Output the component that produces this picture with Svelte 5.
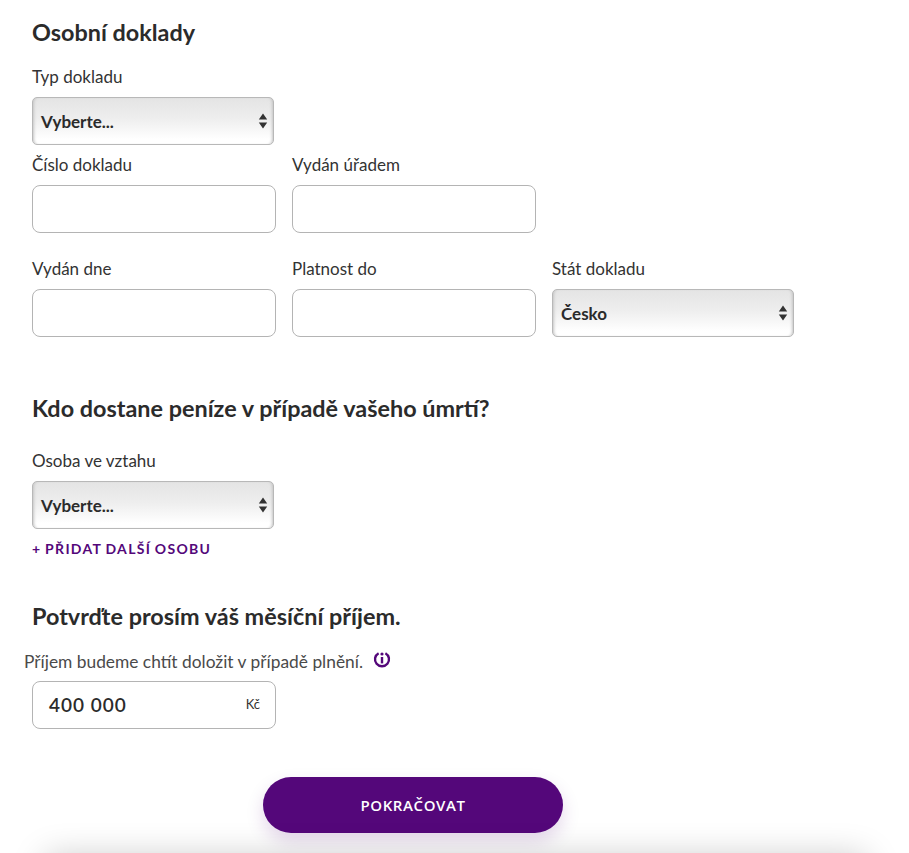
<script>
  const rows = [
    [{ label: "Číslo dokladu" }, { label: "Vydán úřadem" }],
    [{ label: "Vydán dne" }, { label: "Platnost do" }, { label: "Stát dokladu", select: "Česko" }],
  ];
</script>

{#snippet dropdown(value)}
  <div class="select">
    <span>{value}</span>
    <svg width="10" height="16" viewBox="0 0 10 16" aria-hidden="true">
      <path d="M5 0.5 9.2 6.5H0.8Z M0.8 9.5H9.2L5 15.5Z" fill="#333" />
    </svg>
  </div>
{/snippet}

<main>
  <h2 class="first">Osobní doklady</h2>
  <div class="label typ">Typ dokladu</div>
  {@render dropdown("Vyberte...")}

  <div class="row one">
    {#each rows[0] as f}
      <div class="field">
        <div class="label">{f.label}</div>
        <div class="input"></div>
      </div>
    {/each}
  </div>
  <div class="row two">
    {#each rows[1] as f}
      <div class="field">
        <div class="label">{f.label}</div>
        {#if f.select}
          {@render dropdown(f.select)}
        {:else}
          <div class="input"></div>
        {/if}
      </div>
    {/each}
  </div>

  <h2 class="second">Kdo dostane peníze v případě vašeho úmrtí?</h2>
  <div class="label osoba">Osoba ve vztahu</div>
  {@render dropdown("Vyberte...")}
  <div class="add">+ PŘIDAT DALŠÍ OSOBU</div>

  <h2 class="third">Potvrďte prosím váš měsíční příjem.</h2>
  <div class="hint">
    <span>Příjem budeme chtít doložit v případě plnění.</span>
    <svg width="18" height="18" viewBox="0 0 18 18" aria-hidden="true">
      <path d="M5.6 3.2A7 7 0 1 0 12.4 3.2" fill="none" stroke="#54077a" stroke-width="2.4" />
      <circle cx="9" cy="4" r="1.6" fill="#54077a" />
      <rect x="7.8" y="7" width="2.4" height="6.4" fill="#54077a" />
    </svg>
  </div>
  <div class="input income">
    <span class="amount">400 000</span>
    <span class="unit">Kč</span>
  </div>

  <div class="actions">
    <button>POKRAČOVAT</button>
  </div>
  <div class="footer"></div>
</main>

<style>
  :global(body) {
    margin: 0;
    background: #fff;
    overflow: hidden;
  }

  main {
    height: 853px;
    overflow: hidden;
    padding: 18px 0 0 32px;
    box-sizing: border-box;
    font-family: Lato, "Liberation Sans", sans-serif;
    font-size: 17px;
    color: #2b2b2b;
  }

  h2 {
    margin: 0;
    font-size: 23.4px;
    line-height: 28px;
    font-weight: 700;
    color: #2b2b2b;
  }

  .label {
    line-height: 20px;
    height: 20px;
    margin-bottom: 10px;
    color: #333;
  }

  .typ {
    margin-top: 21px;
  }

  .select {
    width: 242px;
    height: 48px;
    box-sizing: border-box;
    padding: 0 5px 0 8px;
    display: flex;
    align-items: center;
    justify-content: space-between;
    border: 1px solid #b8b8b8;
    border-radius: 5px;
    background: linear-gradient(#e4e4e4, #eeeeee 45%, #ffffff 90%);
    box-shadow: inset 3px 0 3px -2px #c4c4c4, inset -3px 0 3px -2px #c4c4c4;
    font-weight: 700;
    color: #2b2b2b;
  }

  .row {
    display: flex;
    gap: 16px;
  }

  .row.one {
    margin-top: 10px;
  }

  .row.two {
    margin-top: 26px;
  }

  .field {
    width: 244px;
  }

  .input {
    width: 244px;
    height: 48px;
    box-sizing: border-box;
    border: 1px solid #b4b4b4;
    border-radius: 8px;
    background: #fff;
  }

  .second {
    margin-top: 57px;
  }

  .osoba {
    margin-top: 29px;
  }

  .add {
    margin-top: 11px;
    line-height: 18px;
    font-size: 14px;
    font-weight: 700;
    letter-spacing: 1.3px;
    word-spacing: -1px;
    color: #54077a;
  }

  .third {
    margin-top: 44px;
  }

  .hint {
    margin: 20px 0 0 -8px;
    height: 22px;
    display: flex;
    align-items: center;
    gap: 10px;
    font-size: 17.35px;
    color: #4a4a4a;
  }

  .hint svg {
    margin-top: -4px;
  }

  .income {
    margin-top: 9px;
    padding: 0 15px 2px 16px;
    display: flex;
    align-items: center;
    justify-content: space-between;
  }

  .amount {
    font-size: 19px;
    font-weight: 600;
    letter-spacing: 1px;
  }

  .unit {
    font-size: 13px;
    color: #333;
  }

  .actions {
    margin: 48px 0 0 231px;
  }

  button {
    display: block;
    width: 300px;
    height: 56px;
    border: 0;
    border-radius: 28px;
    background: #54077a;
    color: #fff;
    font: 600 15px "Open Sans", "Liberation Sans", sans-serif;
    letter-spacing: 0.6px;
    box-shadow: 0 8px 18px rgba(84, 7, 122, 0.16);
  }

  .footer {
    margin: 24px 0 0 14px;
    width: 820px;
    height: 60px;
    background: #fff;
    box-shadow: 0 0 34px rgba(0, 0, 0, 0.22);
  }
</style>
